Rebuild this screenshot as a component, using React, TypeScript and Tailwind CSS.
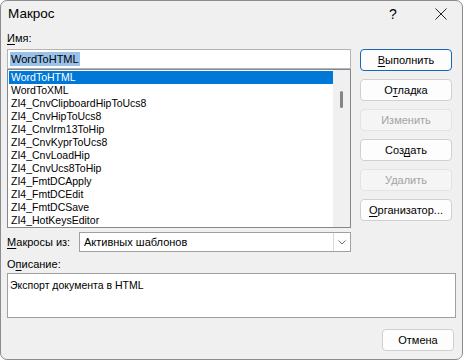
import React from 'react'

const macros = [
  'WordToHTML',
  'WordToXML',
  'ZI4_CnvClipboardHipToUcs8',
  'ZI4_CnvHipToUcs8',
  'ZI4_CnvIrm13ToHip',
  'ZI4_CnvKyprToUcs8',
  'ZI4_CnvLoadHip',
  'ZI4_CnvUcs8ToHip',
  'ZI4_FmtDCApply',
  'ZI4_FmtDCEdit',
  'ZI4_FmtDCSave',
  'ZI4_HotKeysEditor',
]

function Btn({
  children,
  primary,
  disabled,
}: {
  children: React.ReactNode
  primary?: boolean
  disabled?: boolean
}) {
  let cls = 'bg-[#fdfdfd] border-[#d0d0d0] text-black'
  if (primary) cls = 'bg-[#fdfdfd] border-[#1a68b8] text-black'
  if (disabled) cls = 'bg-[#f5f5f5] border-[#e3e3e3] text-[#a3a3a3]'
  return (
    <div
      className={`h-[22px] w-full flex items-center justify-center rounded-[4px] border text-[11px] ${cls}`}
    >
      {children}
    </div>
  )
}

export default function App() {
  return (
    <div
      className="w-[463px] h-[360px] bg-[#f0f0f0] border border-[#8c8c8c] rounded-[7px] overflow-hidden text-black"
      style={{ fontFamily: '"Liberation Sans", Arial, sans-serif' }}
    >
      {/* title bar */}
      <div className="h-[29px] flex items-center pl-[7px] pb-[3px]">
        <span className="text-[13.5px]">Макрос</span>
        <span className="ml-auto text-[14px] w-[12px] text-center">?</span>
        <svg className="ml-[36px] mr-[15px]" width="12" height="12" viewBox="0 0 12 12">
          <path d="M0.5 0.5 L11.5 11.5 M11.5 0.5 L0.5 11.5" stroke="#222" strokeWidth="1" />
        </svg>
      </div>

      <div className="flex gap-[9px] pl-[6px]">
        {/* left column */}
        <div className="w-[344px] flex flex-col">
          <div className="h-[19px] text-[11px] leading-none pt-[3px]">
            <u className="underline-offset-2">И</u>мя:
          </div>
          <div className="h-[20px] bg-white border border-[#b5b5b5] flex items-center pl-[2px]">
            <span className="bg-[#99c2ea] text-[11px] leading-[14px] px-[1px]">WordToHTML</span>
          </div>
          <div className="h-[159px] bg-white border border-[#828790] flex">
            <div className="flex-1 pt-[1px] pl-[1px]">
              {macros.map((m, i) => (
                <div
                  key={m}
                  className={`h-[13px] flex items-center pl-[2px] text-[10.5px] leading-none ${
                    i === 0 ? 'bg-[#0078d7] text-white' : 'text-black'
                  }`}
                >
                  {m}
                </div>
              ))}
            </div>
            <div className="w-[17px] bg-[#f0f0f0] flex justify-center pt-[21px]">
              <div className="w-[3px] h-[17px] rounded-[2px] bg-[#858585]" />
            </div>
          </div>
        </div>

        {/* right column */}
        <div className="w-[92px] pt-[19px] flex flex-col gap-[8px]">
          <Btn primary>
            <span>
              <u className="underline-offset-2">В</u>ыполнить
            </span>
          </Btn>
          <Btn>
            <span>
              О<u className="underline-offset-2">т</u>ладка
            </span>
          </Btn>
          <Btn disabled>Изменить</Btn>
          <Btn>
            <span>
              Соз<u className="underline-offset-2">д</u>ать
            </span>
          </Btn>
          <Btn disabled>Удалить</Btn>
          <Btn>
            <span>
              <u className="underline-offset-2">О</u>рганизатор...
            </span>
          </Btn>
        </div>
      </div>

      {/* macros from */}
      <div className="flex items-center pl-[6px] mt-[4px]">
        <div className="w-[72px] text-[11px]">
          <u className="underline-offset-2">М</u>акросы из:
        </div>
        <div className="w-[272px] h-[20px] bg-white border border-[#a0a0a0] flex">
          <div className="flex-1 flex items-center pl-[4px] text-[11px]">Активных шаблонов</div>
          <div className="w-[17px] border-l border-[#dadada] flex items-center justify-center">
            <svg width="8" height="5" viewBox="0 0 8 5">
              <path d="M0.5 0.5 L4 4 L7.5 0.5" stroke="#6a6a6a" strokeWidth="1" fill="none" />
            </svg>
          </div>
        </div>
      </div>

      {/* description */}
      <div className="pl-[6px] pr-[6px]">
        <div className="h-[21px] flex items-center pt-[3px] text-[11px]">
          О<u className="underline-offset-2">п</u>исание:
        </div>
        <div className="h-[45px] bg-white border border-[#a0a0a0] pl-[2px] pt-[4px] text-[10.5px]">
          Экспорт документа в HTML
        </div>
      </div>

      <div className="flex justify-end pr-[8px] mt-[11px]">
        <div className="w-[72px]">
          <Btn>Отмена</Btn>
        </div>
      </div>
    </div>
  )
}
